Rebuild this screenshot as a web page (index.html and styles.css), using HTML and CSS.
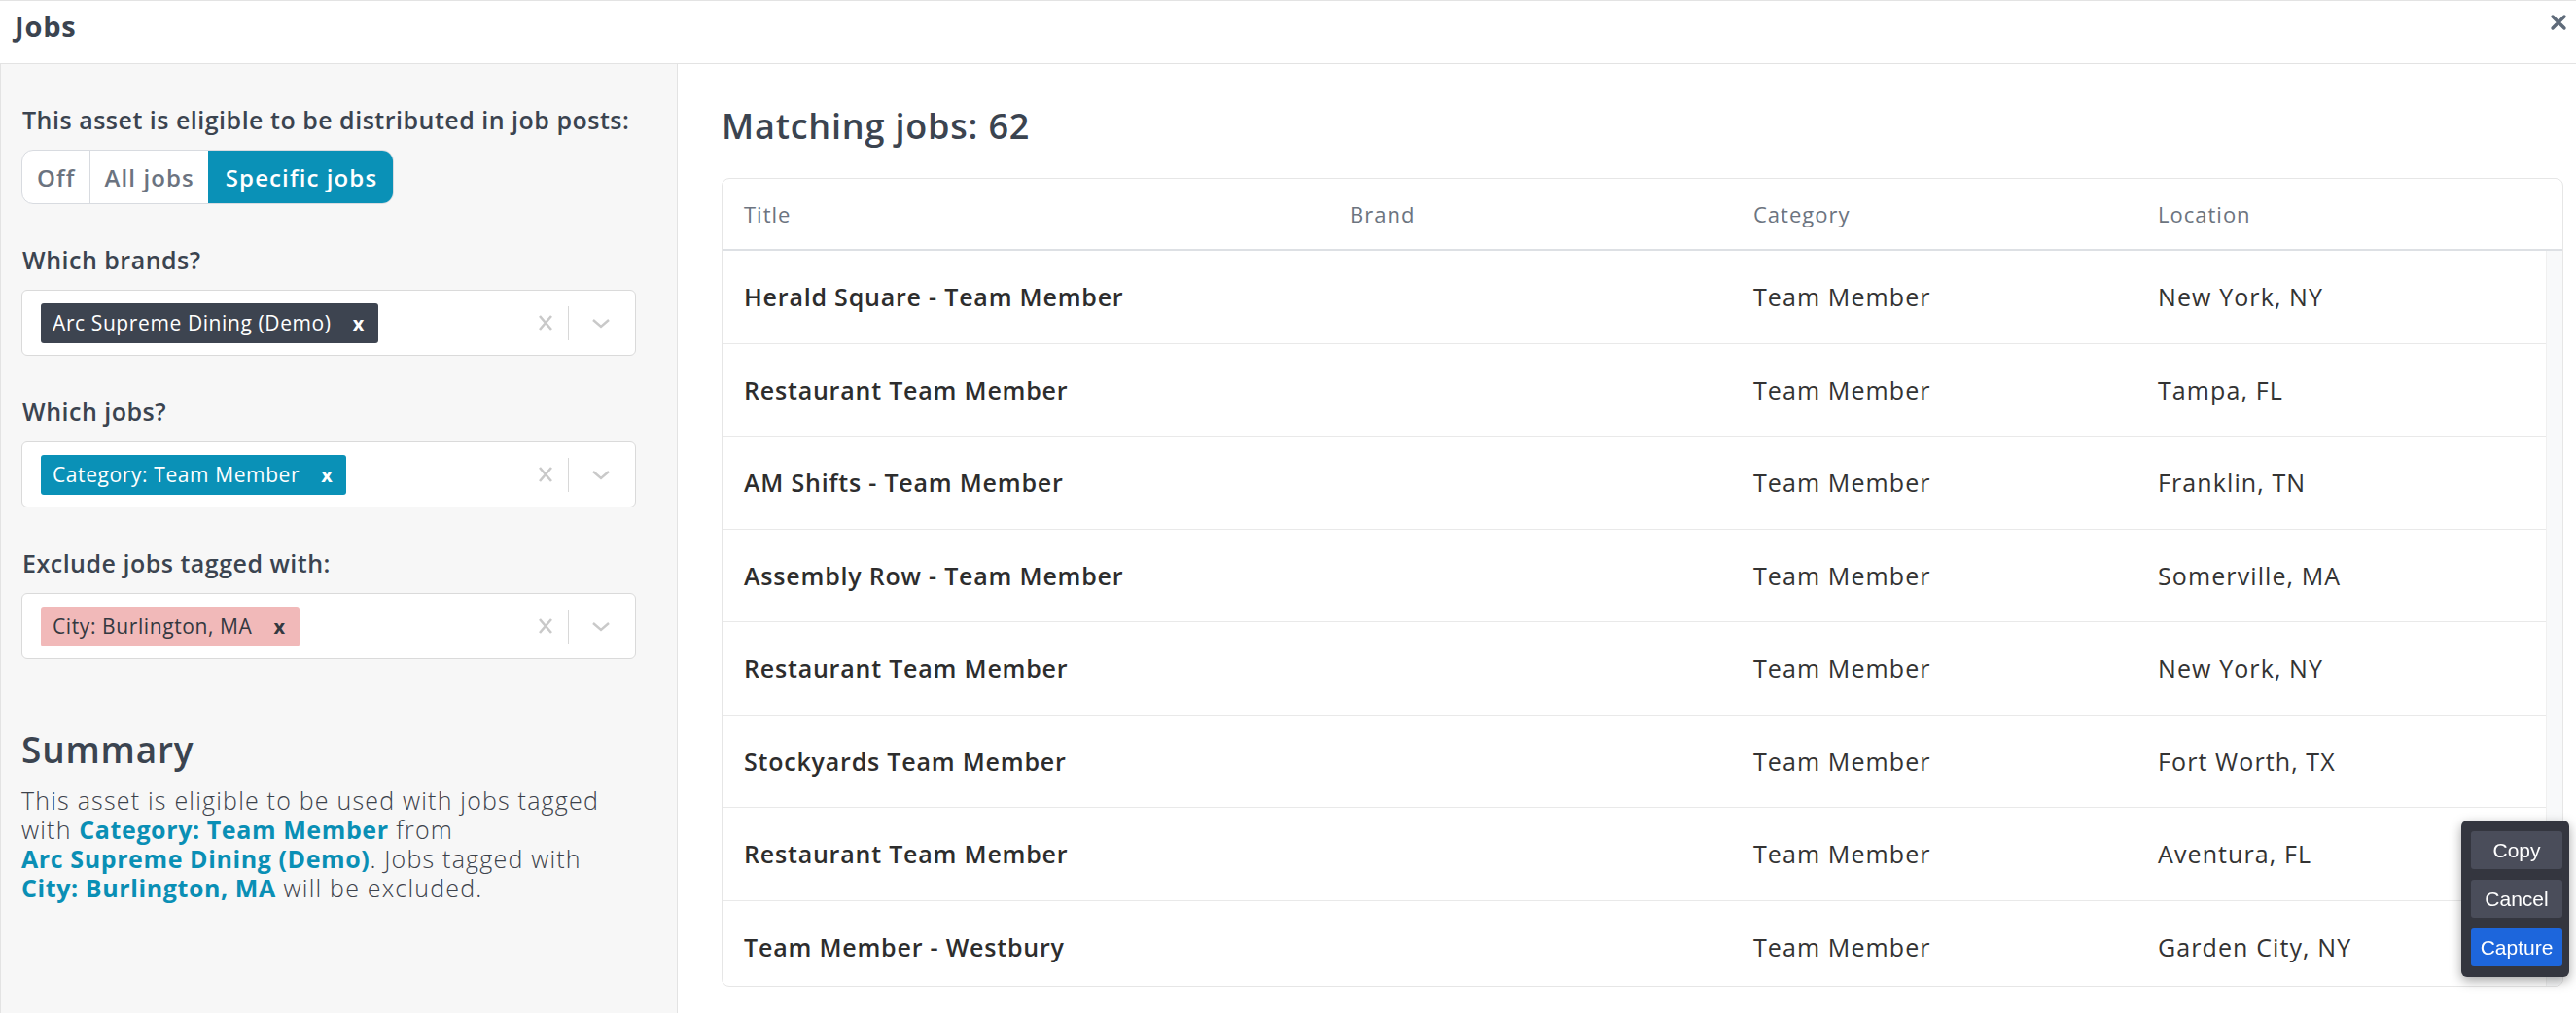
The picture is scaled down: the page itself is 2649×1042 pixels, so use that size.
FILE: index.html
```html
<!DOCTYPE html>
<html lang="en">
<head>
    <meta charset="UTF-8" />
    <title>Jobs</title>
    <link rel="stylesheet" href="styles.css">
</head>
<body>

<div class="modal">
    <!-- Header -->
    <div class="modal-header">
        <h1>Jobs</h1>
        <button class="close-btn" aria-label="Close">
            <svg width="18" height="18" viewBox="0 0 18 18"><path d="M3 3 L15 15 M15 3 L3 15" stroke="#5f6b7a" stroke-width="3.4" stroke-linecap="round"/></svg>
        </button>
    </div>

    <div class="modal-body">
        <!-- Settings column -->
        <div class="settings">
            <div class="field">
                <div class="field-label">This asset is eligible to be distributed in job posts:</div>
                <div class="toggle">
                    <span class="toggle-item">Off</span>
                    <span class="toggle-item">All jobs</span>
                    <span class="toggle-item active">Specific jobs</span>
                </div>
            </div>

            <div class="field">
                <div class="field-label">Which brands?</div>
                <div class="select">
                    <div class="chips">
                        <span class="chip chip-dark">Arc Supreme Dining (Demo)<span class="chip-x">x</span></span>
                    </div>
                    <div class="indicators">
                        <svg class="ind-clear" width="20" height="20" viewBox="0 0 20 20"><path d="M4 3 L16 17 M16 3 L4 17" stroke="#c9c9c9" stroke-width="2.6"/></svg>
                        <span class="ind-sep"></span>
                        <svg class="ind-chevron" width="22" height="20" viewBox="0 0 22 20"><path d="M3 7 L11 14 L19 7" stroke="#c9c9c9" stroke-width="2.4" fill="none"/></svg>
                    </div>
                </div>
            </div>

            <div class="field">
                <div class="field-label">Which jobs?</div>
                <div class="select">
                    <div class="chips">
                        <span class="chip chip-blue">Category: Team Member<span class="chip-x">x</span></span>
                    </div>
                    <div class="indicators">
                        <svg class="ind-clear" width="20" height="20" viewBox="0 0 20 20"><path d="M4 3 L16 17 M16 3 L4 17" stroke="#c9c9c9" stroke-width="2.6"/></svg>
                        <span class="ind-sep"></span>
                        <svg class="ind-chevron" width="22" height="20" viewBox="0 0 22 20"><path d="M3 7 L11 14 L19 7" stroke="#c9c9c9" stroke-width="2.4" fill="none"/></svg>
                    </div>
                </div>
            </div>

            <div class="field">
                <div class="field-label">Exclude jobs tagged with:</div>
                <div class="select">
                    <div class="chips">
                        <span class="chip chip-pink">City: Burlington, MA<span class="chip-x">x</span></span>
                    </div>
                    <div class="indicators">
                        <svg class="ind-clear" width="20" height="20" viewBox="0 0 20 20"><path d="M4 3 L16 17 M16 3 L4 17" stroke="#c9c9c9" stroke-width="2.6"/></svg>
                        <span class="ind-sep"></span>
                        <svg class="ind-chevron" width="22" height="20" viewBox="0 0 22 20"><path d="M3 7 L11 14 L19 7" stroke="#c9c9c9" stroke-width="2.4" fill="none"/></svg>
                    </div>
                </div>
            </div>

            <div class="summary">
                <h2>Summary</h2>
                <p>This asset is eligible to be used with jobs tagged with <b>Category: Team Member</b> from <b>Arc Supreme Dining (Demo)</b>. Jobs tagged with <b>City: Burlington, MA</b> will be excluded.</p>
            </div>
        </div>

        <!-- Results column -->
        <div class="results">
            <h2 class="results-title">Matching jobs: 62</h2>
            <div class="jobs-card">
                <div class="jobs-row jobs-head">
                    <div>Title</div>
                    <div>Brand</div>
                    <div>Category</div>
                    <div>Location</div>
                </div>
                <div class="jobs-scroll">
                    <div class="jobs-list">
                        <div class="jobs-row"><div class="job-title">Herald Square - Team Member</div><div></div><div>Team Member</div><div>New York, NY</div></div>
                        <div class="jobs-row"><div class="job-title">Restaurant Team Member</div><div></div><div>Team Member</div><div>Tampa, FL</div></div>
                        <div class="jobs-row"><div class="job-title">AM Shifts - Team Member</div><div></div><div>Team Member</div><div>Franklin, TN</div></div>
                        <div class="jobs-row"><div class="job-title">Assembly Row - Team Member</div><div></div><div>Team Member</div><div>Somerville, MA</div></div>
                        <div class="jobs-row"><div class="job-title">Restaurant Team Member</div><div></div><div>Team Member</div><div>New York, NY</div></div>
                        <div class="jobs-row"><div class="job-title">Stockyards Team Member</div><div></div><div>Team Member</div><div>Fort Worth, TX</div></div>
                        <div class="jobs-row"><div class="job-title">Restaurant Team Member</div><div></div><div>Team Member</div><div>Aventura, FL</div></div>
                        <div class="jobs-row"><div class="job-title">Team Member - Westbury</div><div></div><div>Team Member</div><div>Garden City, NY</div></div>
                    </div>
                    <div class="scroll-track"></div>
                </div>
            </div>
        </div>
    </div>
</div>

<!-- Capture toolbar -->
<div class="capture-bar">
    <button class="cap-btn">Copy</button>
    <button class="cap-btn">Cancel</button>
    <button class="cap-btn primary">Capture</button>
</div>

</body>
</html>
```

FILE: styles.css
```css
body {
    margin: 0;
    font-family: "Open Sans", "Noto Sans", sans-serif;
    background-color: #ffffff;
    color: #3b4450;
}

.modal {
    height: 1042px;
    display: flex;
    flex-direction: column;
    overflow: hidden;
}

.modal-header {
    height: 64px;
    border-top: 1px solid #e3e3e3;
    border-bottom: 1px solid #e3e3e3;
    display: flex;
    align-items: center;
    justify-content: space-between;
    padding: 0 6px 0 15px;
    flex-shrink: 0;
}

.modal-header h1 {
    margin: 0 0 14px 0;
    font-size: 29px;
    font-weight: 700;
    letter-spacing: 0.8px;
    color: #3b4450;
}

.close-btn {
    border: none;
    background: none;
    padding: 0;
    margin-bottom: 20px;
    width: 24px;
    height: 24px;
    display: flex;
    align-items: center;
    justify-content: center;
}

.modal-body {
    flex: 1;
    display: flex;
    min-height: 0;
}

/* left column */
.settings {
    width: 697px;
    flex-shrink: 0;
    background-color: #f7f7f7;
    border-left: 1px solid #e3e3e3;
    border-right: 1px solid #e3e3e3;
    padding: 41px 0 0 21px;
    box-sizing: border-box;
}

.field {
    margin-bottom: 41px;
    width: 632px;
}

.field-label {
    font-size: 25px;
    font-weight: 600;
    line-height: 32px;
    letter-spacing: 0.5px;
    color: #3b4450;
    margin-bottom: 15px;
    padding-left: 1px;
    white-space: nowrap;
}

.toggle {
    display: inline-flex;
    height: 56px;
    box-sizing: border-box;
    border: 1px solid #d8dbe0;
    border-radius: 12px;
    overflow: hidden;
    background-color: #ffffff;
}

.toggle-item {
    display: flex;
    align-items: center;
    padding: 0 14px 0 15px;
    font-size: 24px;
    font-weight: 600;
    letter-spacing: 1.1px;
    color: #6b7380;
}

.toggle-item + .toggle-item {
    border-left: 1px solid #d8dbe0;
}

.toggle-item.active {
    background-color: #0a91b7;
    color: #ffffff;
    border-left: none;
    padding: 0 16px 0 18px;
}

.select {
    height: 68px;
    box-sizing: border-box;
    border: 1px solid #dadada;
    border-radius: 6px;
    background-color: #ffffff;
    display: flex;
    align-items: center;
    justify-content: space-between;
    padding: 0 24px 0 19px;
}

.chip {
    display: inline-flex;
    align-items: center;
    height: 41px;
    padding: 0 14px 0 12px;
    border-radius: 3px;
    font-size: 21px;
    letter-spacing: 0.6px;
    color: #ffffff;
}

.chip-x {
    font-weight: 700;
    margin-left: 22px;
    font-size: 20px;
}

.chip-dark {
    background-color: #3d4450;
}

.chip-blue {
    background-color: #0a91b7;
}

.chip-pink {
    background-color: #f1b9b9;
    color: #333840;
}

.indicators {
    display: flex;
    align-items: center;
}

.ind-sep {
    width: 1px;
    height: 35px;
    background-color: #d8d8d8;
    margin: 0 22px 0 13px;
}

.summary {
    padding-top: 29px;
    width: 632px;
}

.summary h2 {
    margin: 0 0 14px 0;
    font-size: 37px;
    line-height: 46px;
    font-weight: 600;
    letter-spacing: 0.8px;
    color: #3b4450;
}

.summary p {
    margin: 0;
    font-size: 25px;
    line-height: 30px;
    font-weight: 300;
    letter-spacing: 1.2px;
    color: #3c424b;
}

.summary b {
    color: #0a8fb5;
    font-weight: 700;
    letter-spacing: 0.6px;
    white-space: nowrap;
}

/* right column */
.results {
    flex: 1;
    padding: 42px 13px 0 45px;
    min-width: 0;
}

.results-title {
    margin: 0 0 31px 0;
    font-size: 36px;
    line-height: 44px;
    font-weight: 600;
    letter-spacing: 0.8px;
    color: #3b4450;
}

.jobs-card {
    border: 1px solid #e6e6e6;
    border-radius: 8px;
    overflow: hidden;
    height: 832px;
    box-sizing: border-box;
}

.jobs-row {
    display: grid;
    grid-template-columns: 623px 415px 416px 1fr;
    align-items: center;
    height: 94.5px;
    border-bottom: 1px solid #e9e9e9;
    font-size: 25px;
    letter-spacing: 1.1px;
    color: #333333;
}

.jobs-row > div {
    padding-left: 22px;
}

.jobs-head {
    height: 72px;
    border-bottom: 2px solid #dde0e4;
    font-size: 22px;
    letter-spacing: 1px;
    color: #6c7480;
}

.job-title {
    font-weight: 600;
    letter-spacing: 0.8px;
    color: #2d2d2d;
}

.jobs-scroll {
    display: flex;
    height: 760px;
}

.jobs-list {
    flex: 1;
}

.scroll-track {
    width: 16px;
    background-color: #f8f9fa;
    border-left: 1px solid #f0f0f0;
}

/* screenshot toolbar overlay */
.capture-bar {
    position: fixed;
    left: 2531px;
    top: 844px;
    width: 111px;
    box-sizing: border-box;
    padding: 11px 7px 11px 10px;
    background-color: #34363f;
    border-radius: 6px;
    box-shadow: 0 4px 12px rgba(0, 0, 0, 0.35);
    display: flex;
    flex-direction: column;
    gap: 11px;
}

.cap-btn {
    height: 39px;
    border: none;
    border-radius: 3px;
    background-color: #4a4d5a;
    color: #ffffff;
    font-family: "Liberation Sans", Arial, sans-serif;
    font-size: 21px;
    padding: 0;
}

.cap-btn.primary {
    background-color: #1d66dc;
}
```
